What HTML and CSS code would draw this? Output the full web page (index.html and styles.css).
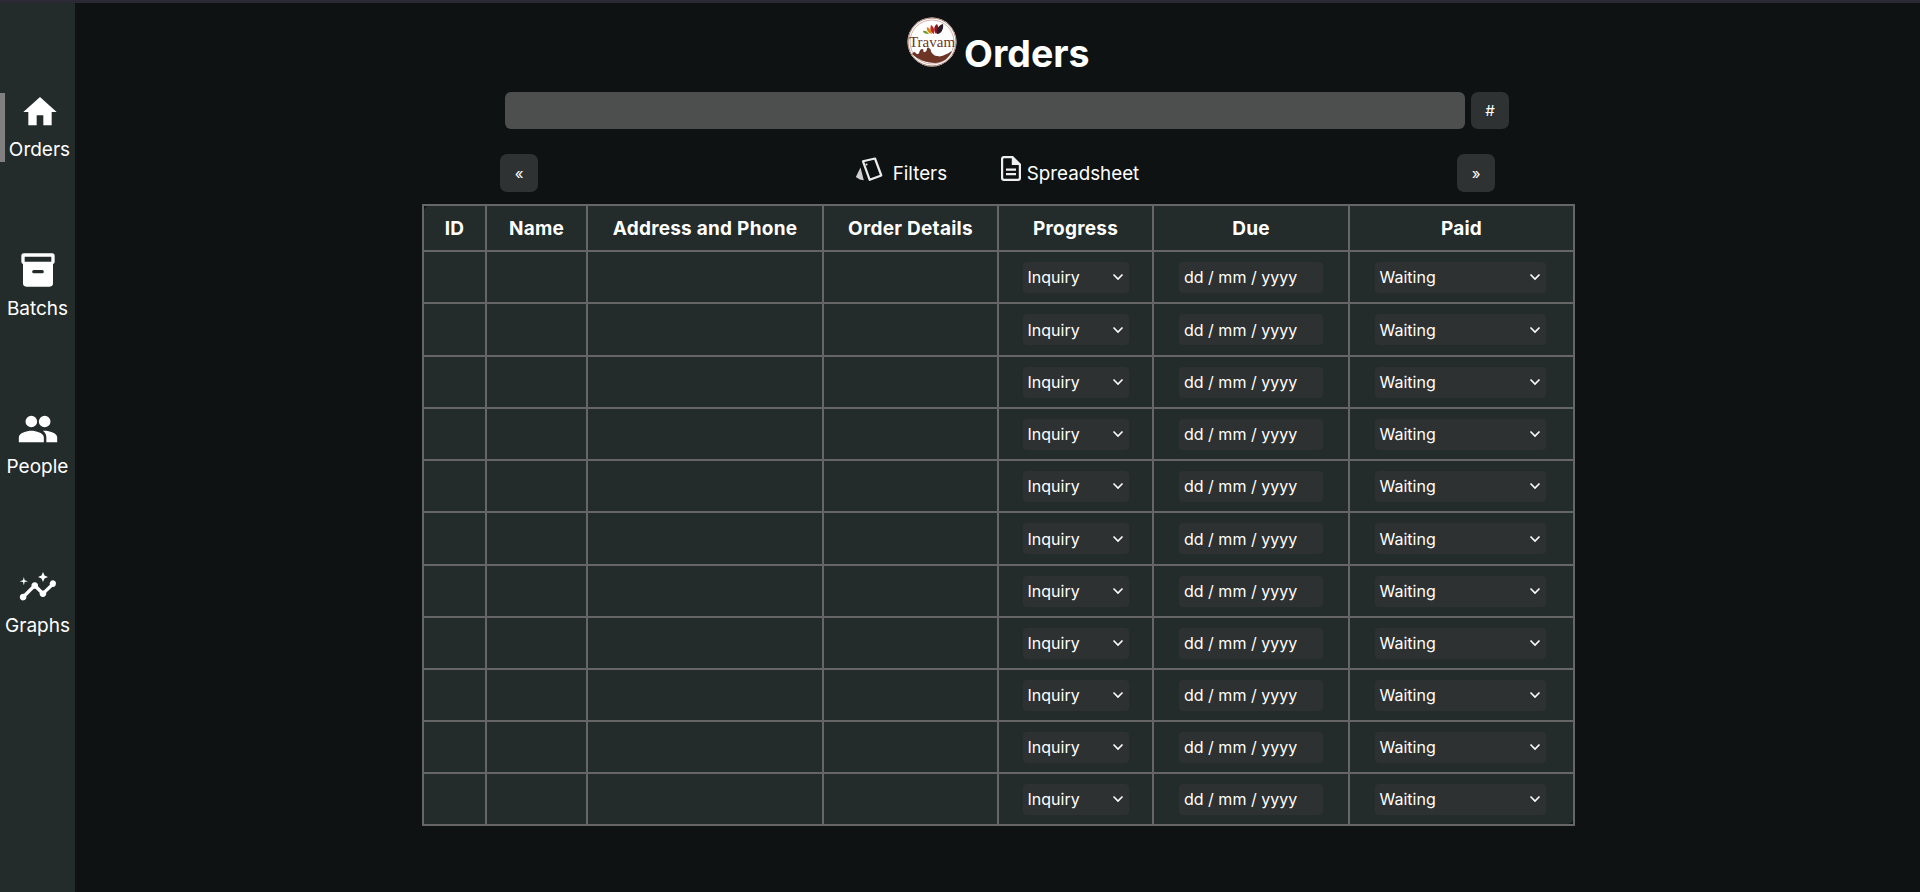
FILE: index.html
```html
<!DOCTYPE html>
<html lang="en">
<head>
<meta charset="utf-8">
<title>Orders</title>
<link rel="stylesheet" href="styles.css">
</head>
<body>
<div class="app">
<nav class="sidebar">
  <a class="nav-item active"><svg class="nav-icon" viewBox="0 0 24 24"><path d="M10 20v-6h4v6h5v-8h3L12 3 2 12h3v8z"/></svg><span>Orders</span></a>
  <a class="nav-item"><svg class="nav-icon" viewBox="0 0 24 24"><path fill-rule="evenodd" d="M3.500 2h17A1.500 1.500 0 0 1 22 3.500V7a1.500 1.500 0 0 1-1 1.400V20a2 2 0 0 1-2 2H5a2 2 0 0 1-2-2V8.400A1.500 1.500 0 0 1 2 7V3.500A1.500 1.500 0 0 1 3.500 2zM4 4v3h16V4zM9.500 12a1 1 0 0 0 0 2h5a1 1 0 0 0 0-2z"/></svg><span>Batchs</span></a>
  <a class="nav-item"><svg class="nav-icon" viewBox="0 0 24 24"><path d="M16 11a3.500 3.500 0 1 0 0-7 3.500 3.500 0 0 0 0 7zM8 11a3.500 3.500 0 1 0 0-7 3.500 3.500 0 0 0 0 7zm0 2c-2.700 0-7.500 1.300-7.500 4v3h15v-3c0-2.700-4.800-4-7.500-4zm8 0c-.3 0-.7 0-1.100.1 1.300.9 2.100 2.200 2.100 3.900v3h6.500v-3c0-2.700-4.800-4-7.500-4z"/></svg><span>People</span></a>
  <a class="nav-item"><svg class="nav-icon" viewBox="0 0 24 24"><path d="M21 8a2 2 0 0 0-1.900 2.600l-3.600 3.500a2 2 0 0 0-1 0l-2.500-2.500a2 2 0 1 0-3.900 0l-4.500 4.500a2 2 0 1 0 1.400 1.400l4.500-4.500a2 2 0 0 0 1 0l2.500 2.500a2 2 0 1 0 3.900 0l3.600-3.500A2 2 0 1 0 21 8zM15 9l.9-2.100L18 6l-2.100-.9L15 3l-.9 2.100L12 6l2.100.9zM3.500 11l.5-2 2-.5-2-.5-.5-2-.5 2-2 .5 2 .5z"/></svg><span>Graphs</span></a>
</nav>
<main class="content">
  <header class="title-row">
    <svg class="logo" viewBox="0 0 50 50">
      <circle cx="25" cy="25" r="24.500" fill="#fff"/>
      <circle cx="25" cy="25" r="24" fill="none" stroke="#a87a6c" stroke-width="1"/>
      <circle cx="25" cy="25" r="22" fill="none" stroke="#b89084" stroke-width=".7"/>
      <path d="M22 17c-2-3-4-4-6-3 0 2 2 3 6 3z" fill="#6a9a2a"/>
      <path d="M25 17c-1-5-3-6-5-7-1 3 1 6 5 7z" fill="#d88a18"/>
      <path d="M27 17c1-5-1-8-3-9-1 3-1 7 3 9z" fill="#c8201c"/>
      <path d="M29 17c3-3 3-7 1-10-3 2-4 6-1 10z" fill="#8a1426"/>
      <path d="M30 17c4 0 7-5 6-10-4 1-7 5-6 10z" fill="#2c1a2a"/>
      <text x="25" y="30" class="logo-text">Travam</text>
      <path d="M5 37c3-4 3-1 5 0 3 1 2-5 5-5s0 4 3 3 1-6 4-4 1 3 3 5 2 3 6 3 8-1 14-5c-3 7-9 12-17 12-9 0-18-4-23-9z" fill="#6e3527"/>
      <path d="M30 38c3-4 6-2 9-4l2 1c-4 4-10 6-11 3z" fill="#fff"/>
    </svg>
    <h1 class="title">Orders</h1>
  </header>
  <div class="search-row">
    <input class="search" type="text" aria-label="Search">
    <button class="btn">#</button>
  </div>
  <div class="pager">
    <button class="btn">«</button>
    <div class="links">
      <a class="link link-filters"><svg class="filters-icon" viewBox="0 0 28 25"><path d="M5.500 10.500L.8 20l4 2.500 4 .8z" fill="#cfcfcf"/><path d="M8 4.300L20 1.500l6.300 17-11.600 4.300z" fill="#0d1113" stroke="#ececec" stroke-width="2.200" stroke-linejoin="round"/><circle cx="11.500" cy="7.500" r="1" fill="#ececec"/></svg>Filters</a>
      <a class="link link-sheet"><svg class="sheet-icon" viewBox="0 0 20 25"><path fill="#f0f0f0" fill-rule="evenodd" d="M3 0h9l8 8v14a3 3 0 0 1-3 3H3a3 3 0 0 1-3-3V3a3 3 0 0 1 3-3zm0 2.200a.8.8 0 0 0-.8.8v19c0 .4.4.8.8.8h14c.4 0 .8-.4.8-.8V9h-7V2.200zM5 12.500h10v2.200H5zm0 4.500h10v2.200H5z"/></svg>Spreadsheet</a>
    </div>
    <button class="btn">»</button>
  </div>
  <table class="orders">
    <colgroup><col class="c1"><col class="c2"><col class="c3"><col class="c4"><col class="c5"><col class="c6"><col class="c7"></colgroup>
    <thead><tr><th>ID</th><th>Name</th><th>Address and Phone</th><th>Order Details</th><th>Progress</th><th>Due</th><th>Paid</th></tr></thead>
    <tbody id="rows"></tbody>
  </table>
</main>
</div>
<script src="app.js"></script>
</body>
</html>
```
FILE: app.js
```js
var chev = '<svg class="chev" viewBox="0 0 12 8"><path d="M1.500 1.500L6 6l4.500-4.500" fill="none" stroke="#fff" stroke-width="1.600"/></svg>';
var row = '<tr><td></td><td></td><td></td><td></td>' +
  '<td><span class="select sel-progress">Inquiry' + chev + '</span></td>' +
  '<td><span class="date">dd / mm / yyyy</span></td>' +
  '<td class="paid"><span class="select sel-paid">Waiting' + chev + '</span></td></tr>';
document.getElementById('rows').innerHTML = new Array(12).join(row);
```
FILE: styles.css
```css
* { box-sizing: border-box; }
html, body { margin: 0; height: 100%; }
body {
  background: #0e1213;
  color: #fff;
  font-family: "Inter", "Liberation Sans", sans-serif;
  overflow: hidden;
}
.app {
  display: flex;
  height: 892px;
  border-top: 3px solid #2b2933;
}
.sidebar {
  width: 75px;
  flex: none;
  background: #242b2b;
  display: flex;
  flex-direction: column;
  padding-top: 90px;
}
.nav-item {
  height: 158.500px;
  display: flex;
  flex-direction: column;
  align-items: center;
  font-size: 19px;
  line-height: 24px;
  color: #fff;
}
.nav-item span { margin-top: 6.500px; }
.nav-item .nav-icon { margin-top: -2px; }
.nav-item.active {
  height: 69px;
  margin-bottom: 90px;
  border-left: 5px solid #808080;
}
.nav-item.active span { margin-top: 6px; margin-left: -1px; }
.nav-item.active .nav-icon { margin-top: -1px; }
.nav-icon { width: 40px; height: 40px; fill: #fff; flex: none; }
.content {
  flex: 1;
  display: flex;
  flex-direction: column;
  align-items: flex-start;
  padding-left: 347px;
}
.title-row {
  display: flex;
  align-items: flex-start;
  margin-left: 485px;
  padding-top: 14px;
  height: 89px;
}
.logo { width: 50px; height: 50px; }
.logo-text {
  font-family: "Liberation Serif", serif;
  font-size: 15px;
  fill: #6e3527;
  text-anchor: middle;
}
.title {
  margin: 17px 0 0 7px;
  font-size: 37.500px;
  line-height: 40px;
  font-weight: 700;
}
.search-row {
  display: flex;
  gap: 6px;
  margin-left: 83px;
  height: 37px;
}
.search {
  width: 960px;
  height: 37px;
  background: #4d4f4e;
  border: 0;
  border-radius: 6px;
}
.btn {
  width: 38px;
  height: 38px;
  background: #2e3232;
  border: 0;
  border-radius: 7px;
  color: #fff;
  font-family: inherit;
  font-size: 15px;
  padding: 0;
}
.search-row .btn { height: 37px; }
.pager {
  display: flex;
  justify-content: space-between;
  align-items: center;
  width: 995px;
  margin: 25px 0 12px 78px;
}
.links {
  display: flex;
  align-items: center;
  padding-right: 1px;
}
.link {
  display: flex;
  align-items: center;
  font-size: 18.800px;
  color: #fff;
}
.link-filters { width: 146px; }
.filters-icon { width: 28px; height: 25px; margin: -8px 10px 0 0; }
.sheet-icon { width: 20px; height: 25px; margin: -10px 6px 0 0; }
.orders {
  width: 1151px;
  table-layout: fixed;
  border-collapse: separate;
  border-spacing: 0;
  border: 2px solid #666;
}
.c1 { width: 63px; }
.c2 { width: 101px; }
.c3 { width: 236px; }
.c4 { width: 175px; }
.c5 { width: 155px; }
.c6 { width: 196px; }
.c7 { width: 223px; }
th, td {
  background: #242b2b;
  border-right: 2px solid #666;
  border-bottom: 2px solid #666;
  padding: 0;
  text-align: center;
}
th:last-child, td:last-child { border-right: 0; }
tr:last-child td { border-bottom: 0; height: 50px; }
th:first-child { border-top-left-radius: 5px; }
tr:last-child td:last-child { border-bottom-right-radius: 5px; }
th {
  height: 46px;
  font-size: 19px;
  letter-spacing: .25px;
  font-weight: 700;
}
td { height: 52px; }
tr:nth-child(2) td, tr:nth-child(6) td { height: 53px; }
td.paid { padding-right: 3px; }
.select, .date {
  display: inline-flex;
  align-items: center;
  justify-content: space-between;
  height: 31px;
  background: #2d3131;
  border-radius: 4px;
  font-size: 16px;
  vertical-align: middle;
  text-align: left;
}
.select { padding: 0 5px; }
.sel-progress { width: 106px; }
.sel-paid { width: 171px; }
.date { width: 144px; padding: 0 5px; }
.chev { width: 12px; height: 8px; }
```
